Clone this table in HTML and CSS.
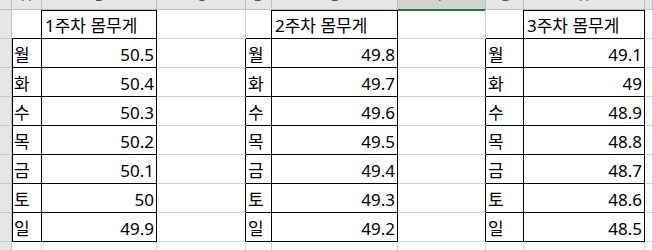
FILE: index.html
```html
<!DOCTYPE html>
<html lang="ko">
<head>
<meta charset="utf-8">
<link rel="stylesheet" href="styles.css">
</head>
<body>
<div class="sheet">
  <!-- column header band -->
  <div class="c hd corner"></div>
  <div class="c hd"><span class="lt">A</span></div>
  <div class="c hd"><span class="lt">B</span></div>
  <div class="c hd"><span class="lt">C</span></div>
  <div class="c hd"><span class="lt">D</span></div>
  <div class="c hd"><span class="lt">E</span></div>
  <div class="c hd sel"><span class="lt">F</span></div>
  <div class="c hd"><span class="lt">G</span></div>
  <div class="c hd"><span class="lt">H</span></div>
  <div class="c hd"></div>

  <!-- row 1 -->
  <div class="c rh"></div>
  <div class="c br bb"></div>
  <div class="c br bb ttl top">1주차 몸무게</div>
  <div class="c"></div>
  <div class="c br bb"></div>
  <div class="c br bb ttl top">2주차 몸무게</div>
  <div class="c"></div>
  <div class="c br bb"></div>
  <div class="c br bb ttl top">3주차 몸무게</div>
  <div class="c"></div>

  <!-- row 2 -->
  <div class="c rh"></div>
  <div class="c br bb day first">월</div>
  <div class="c br bb num">50.5</div>
  <div class="c br"></div>
  <div class="c br bb day">월</div>
  <div class="c br bb num">49.8</div>
  <div class="c br"></div>
  <div class="c br bb day">월</div>
  <div class="c br bb num">49.1</div>
  <div class="c"></div>

  <!-- row 3 -->
  <div class="c rh"></div>
  <div class="c br bb day first">화</div>
  <div class="c br bb num">50.4</div>
  <div class="c br"></div>
  <div class="c br bb day">화</div>
  <div class="c br bb num">49.7</div>
  <div class="c br"></div>
  <div class="c br bb day">화</div>
  <div class="c br bb num">49</div>
  <div class="c"></div>

  <!-- row 4 -->
  <div class="c rh"></div>
  <div class="c br bb day first">수</div>
  <div class="c br bb num">50.3</div>
  <div class="c br"></div>
  <div class="c br bb day">수</div>
  <div class="c br bb num">49.6</div>
  <div class="c br"></div>
  <div class="c br bb day">수</div>
  <div class="c br bb num">48.9</div>
  <div class="c"></div>

  <!-- row 5 -->
  <div class="c rh"></div>
  <div class="c br bb day first">목</div>
  <div class="c br bb num">50.2</div>
  <div class="c br"></div>
  <div class="c br bb day">목</div>
  <div class="c br bb num">49.5</div>
  <div class="c br"></div>
  <div class="c br bb day">목</div>
  <div class="c br bb num">48.8</div>
  <div class="c"></div>

  <!-- row 6 -->
  <div class="c rh"></div>
  <div class="c br bb day first">금</div>
  <div class="c br bb num">50.1</div>
  <div class="c br"></div>
  <div class="c br bb day">금</div>
  <div class="c br bb num">49.4</div>
  <div class="c br"></div>
  <div class="c br bb day">금</div>
  <div class="c br bb num">48.7</div>
  <div class="c"></div>

  <!-- row 7 -->
  <div class="c rh"></div>
  <div class="c br bb day first">토</div>
  <div class="c br bb num">50</div>
  <div class="c br"></div>
  <div class="c br bb day">토</div>
  <div class="c br bb num">49.3</div>
  <div class="c br"></div>
  <div class="c br bb day">토</div>
  <div class="c br bb num">48.6</div>
  <div class="c"></div>

  <!-- row 8 -->
  <div class="c rh"></div>
  <div class="c br bb day first">일</div>
  <div class="c br bb num">49.9</div>
  <div class="c br"></div>
  <div class="c br bb day">일</div>
  <div class="c br bb num">49.2</div>
  <div class="c br"></div>
  <div class="c br bb day">일</div>
  <div class="c br bb num">48.5</div>
  <div class="c"></div>

  <!-- row 9 -->
  <div class="c rh"></div>
  <div class="c"></div>
  <div class="c"></div>
  <div class="c"></div>
  <div class="c"></div>
  <div class="c"></div>
  <div class="c"></div>
  <div class="c"></div>
  <div class="c"></div>
  <div class="c"></div>
</div>
</body>
</html>
```

FILE: styles.css
```css
html, body {
  margin: 0;
  padding: 0;
  background: #ffffff;
}

body {
  width: 653px;
  height: 250px;
  overflow: hidden;
  font-family: "Noto Sans", "Noto Sans CJK KR", sans-serif;
  font-size: 17px;
  color: #000000;
}

.sheet {
  display: grid;
  grid-template-columns: 12px 30px 115px 89px 26px 126px 88px 38px 121px 8px;
  grid-template-rows: 10px repeat(8, 29px) 20px;
  width: 653px;
  height: 250px;
}

.c {
  box-sizing: border-box;
  border-right: 1px solid #d4d4d4;
  border-bottom: 1px solid #d4d4d4;
  overflow: hidden;
  white-space: nowrap;
  line-height: 27px;
  padding-top: 2px;
}

.br { border-right-color: #000000; }
.bb { border-bottom-color: #000000; }

/* column header band */
.hd {
  background: #e6e6e6;
  border-right-color: #bfbfbf;
  border-bottom-color: #bfbfbf;
  padding-top: 0;
  line-height: 16px;
}
.hd.sel {
  background: #d2d2d2;
  border-bottom-color: #217346;
  box-shadow: 0 1px 0 #217346;
}
.lt {
  display: block;
  margin-top: -12px;
  text-align: center;
  font-size: 14px;
  color: #555555;
}
.hd.sel .lt { color: #1e6b41; }

/* row header strip */
.rh {
  background: #e6e6e6;
  border-right-color: #bfbfbf;
  border-bottom-color: #c8c8c8;
}

.top { box-shadow: inset 0 1px 0 #000000; }
.first { box-shadow: inset 1px 0 0 #000000; }

.ttl { padding-left: 3px; }
.day { padding-left: 2px; }
.num { text-align: right; padding-right: 2px; }
```
